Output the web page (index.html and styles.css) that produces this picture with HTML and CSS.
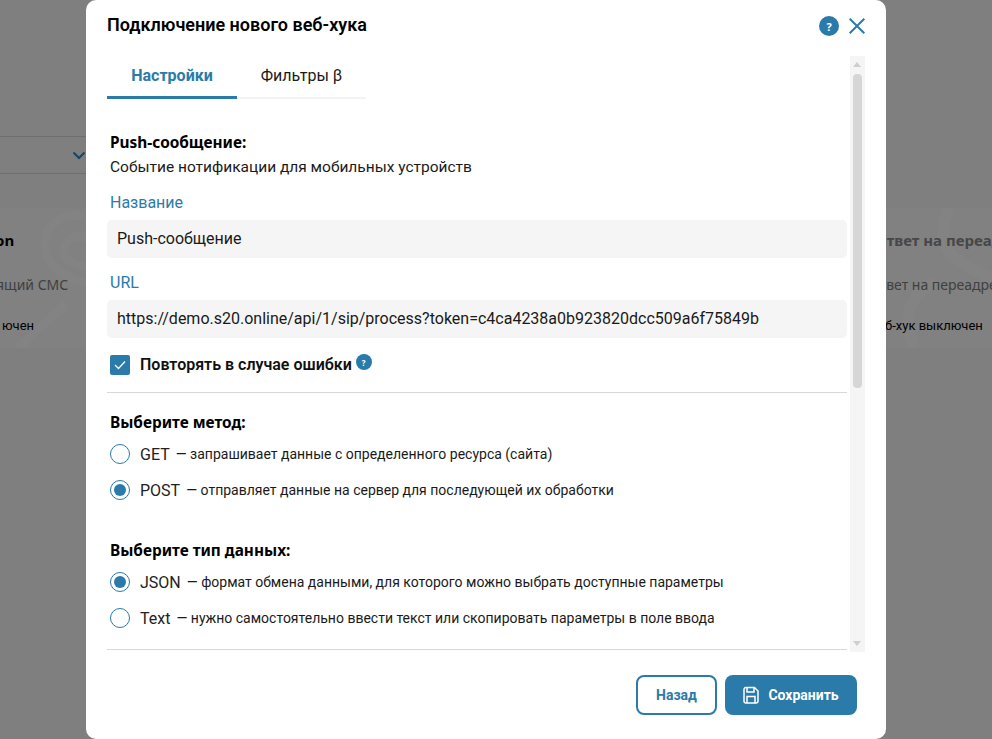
FILE: index.html
```html
<!DOCTYPE html>
<html lang="ru">
<head>
<meta charset="utf-8">
<title>Подключение нового веб-хука</title>
<link rel="stylesheet" href="styles.css">
</head>
<body>
<div class="page">
  <div class="filter">
    <svg class="filter-chevron" width="14" height="9" viewBox="0 0 14 9"><path d="M1.500 1.500 7 7l5.500-5.500" fill="none" stroke="#154664" stroke-width="2"/></svg>
  </div>
  <div class="cards">
    <div class="card card-left">
      <svg class="mark mark-left" width="90" height="140" viewBox="0 0 90 140"><path d="M90 10C60 0 42 20 45 42c3 20 25 30 45 34M90 30c-20-6-28 8-26 16 2 8 14 12 26 14M66 96 18 140" fill="none" stroke="#838383" stroke-width="9"/></svg>
      <div class="card-title">on</div>
      <div class="card-desc">ящий СМС</div>
      <div class="card-state">ючен</div>
    </div>
    <div class="card card-right">
      <svg class="mark mark-right" width="117" height="140" viewBox="0 0 117 140"><path d="M40 140C25 110 35 85 60 75M75 0c-15 30-10 50 42 70" fill="none" stroke="#838383" stroke-width="12"/></svg>
      <div class="card-title card-title-off">Ответ на переадресацию</div>
      <div class="card-desc">Ответ на переадресацию</div>
      <div class="card-state">Веб-хук выключен</div>
    </div>
  </div>
</div>

<div class="modal">
  <header class="modal-head">
    <h1 class="modal-title">Подключение нового веб-хука</h1>
    <span class="help help-big">?</span>
    <svg class="close" width="16" height="16" viewBox="0 0 16 16"><path d="M.7.7l14.600 14.600M15.300.7.7 15.300" fill="none" stroke="#2a7ba9" stroke-width="2"/></svg>
  </header>

  <div class="scroll-row">
    <div class="content">
      <nav class="tabs">
        <span class="tab tab-active">Настройки</span>
        <span class="tab">Фильтры β</span>
      </nav>

      <div class="body">
        <div class="heading">Push-сообщение:</div>
        <div class="intro">Событие нотификации для мобильных устройств</div>

        <label class="label label-first">Название</label>
        <div class="field">Push-сообщение</div>
        <label class="label">URL</label>
        <div class="field">https://demo.s20.online/api/1/sip/process?token=c4ca4238a0b923820dcc509a6f75849b</div>

        <div class="repeat">
          <span class="check">
            <svg width="12" height="10" viewBox="0 0 12 10"><path d="M1 5l3.500 3.500L11 1.500" fill="none" stroke="#fff" stroke-width="1.300"/></svg>
          </span>
          <span class="repeat-text">Повторять в случае ошибки</span>
          <span class="help help-small">?</span>
        </div>

        <hr class="rule rule-a">

        <div class="heading heading-method">Выберите метод:</div>
        <div class="options">
          <div class="option"><span class="radio"></span><span class="opt-name">GET</span><span class="opt-desc">— запрашивает данные с определенного ресурса (сайта)</span></div>
          <div class="option"><span class="radio radio-on"></span><span class="opt-name">POST</span><span class="opt-desc">— отправляет данные на сервер для последующей их обработки</span></div>
        </div>

        <div class="heading heading-types">Выберите тип данных:</div>
        <div class="options">
          <div class="option"><span class="radio radio-on"></span><span class="opt-name">JSON</span><span class="opt-desc">— формат обмена данными, для которого можно выбрать доступные параметры</span></div>
          <div class="option"><span class="radio"></span><span class="opt-name">Text</span><span class="opt-desc">— нужно самостоятельно ввести текст или скопировать параметры в поле ввода</span></div>
        </div>

        <hr class="rule rule-b">
      </div>
    </div>

    <div class="scrollbar">
      <span class="arrow arrow-up"></span>
      <span class="thumb"></span>
      <span class="arrow arrow-down"></span>
    </div>
  </div>

  <footer class="modal-foot">
    <button class="btn btn-ghost">Назад</button>
    <button class="btn btn-solid">
      <svg width="16" height="18" viewBox="0 0 16 18"><path d="M1 3.500A2 2 0 0 1 3 1.500h8.500L15 5v10a2 2 0 0 1-2 2H3a2 2 0 0 1-2-2zM4 2v4h7V2M4 17v-6.500h8V17" fill="none" stroke="#fff" stroke-width="1.500"/></svg>
      Сохранить
    </button>
  </footer>
</div>
</body>
</html>
```

FILE: styles.css
```css
* { box-sizing: border-box; }
html, body { margin: 0; height: 100%; }
body {
  background: #7f7f7f;
  overflow: hidden;
  font-family: Roboto, "Liberation Sans", sans-serif;
  color: #000;
  position: relative;
}

/* dimmed page behind the dialog */
.page { padding-top: 136px; height: 739px; overflow: hidden; }
.filter {
  width: 100px;
  height: 38px;
  border-top: 1px solid #6f6f6f;
  border-bottom: 1px solid #6f6f6f;
  display: flex;
  align-items: center;
  padding-left: 72px;
}
.cards {
  margin-top: 34px;
  display: flex;
  justify-content: space-between;
}
.card {
  position: relative;
  height: 140px;
  background: #818181;
  overflow: hidden;
  padding-top: 22px;
  font-family: "Noto Sans", sans-serif;
}
.card-left { width: 90px; }
.card-right { width: 117px; white-space: nowrap; overflow: visible; }
.mark { position: absolute; top: 0; }
.mark-left { left: 0; }
.mark-right { right: 0; }
.card-title, .card-desc, .card-state { position: relative; white-space: nowrap; }
.card-title { font-size: 15px; font-weight: 700; line-height: 20px; color: #000; }
.card-title-off { color: #474747; }
.card-desc { margin-top: 25px; font-size: 14px; line-height: 20px; color: #404040; }
.card-state { margin-top: 21px; font-family: Roboto, sans-serif; font-size: 13px; line-height: 20px; color: #000; }
.card-left .card-title { margin-left: -5px; }
.card-left .card-desc { margin-left: -4px; }
.card-left .card-state { margin-left: 2px; }
.card-right .card-desc { margin-left: -6px; }
.card-right .card-state { margin-left: -5px; }

/* dialog */
.modal {
  position: absolute;
  left: 86px;
  top: 0;
  width: 800px;
  height: 739px;
  background: #fff;
  border-radius: 10px;
  display: flex;
  flex-direction: column;
}
.modal-head {
  height: 56px;
  padding: 0 21px;
  display: flex;
  align-items: center;
  flex: none;
}
.modal-title {
  margin: 0 auto 6px 0;
  font-size: 18px;
  line-height: 24px;
  font-weight: 600;
  color: #000;
}
.help {
  display: inline-flex;
  align-items: center;
  justify-content: center;
  border-radius: 50%;
  background: #2a7ba9;
  color: #fff;
  font-weight: 700;
  font-family: "Open Sans", sans-serif;
}
.help-big { width: 20px; height: 20px; font-size: 11px; margin: 0 10px 4px 0; }
.help-small { width: 16px; height: 16px; font-size: 8px; margin: 0 0 6px 4px; }
.close { margin: 0 0 4px 0; }

.scroll-row {
  flex: none;
  height: 596px;
  margin: 0 21px;
  display: flex;
  gap: 3px;
}
.content { width: 740px; flex: none; overflow: hidden; }

.scrollbar {
  width: 15px;
  flex: none;
  background: #f5f5f5;
  display: flex;
  flex-direction: column;
  align-items: center;
  position: relative;
  padding-top: 18px;
}
.thumb {
  width: 9px;
  height: 314px;
  background: #d6d6d6;
  border-radius: 4px;
}
.arrow {
  position: absolute;
  left: 3px;
  width: 0;
  height: 0;
  border-left: 4.500px solid transparent;
  border-right: 4.500px solid transparent;
}
.arrow-up { top: 6px; border-bottom: 5px solid #cfcfcf; }
.arrow-down { bottom: 6px; border-top: 5px solid #cfcfcf; }

.tabs {
  width: 259px;
  height: 43px;
  display: flex;
  border-bottom: 2px solid #f3f3f3;
}
.tab {
  height: 43px;
  font-size: 16px;
  line-height: 39px;
  text-align: center;
  color: #1a1a1a;
  width: 130px;
  flex: none;
}
.tab:nth-child(2) { width: 129px; }
.tab-active {
  color: #2a7ba9;
  font-weight: 700;
  border-bottom: 3px solid #2a7ba9;
}

.body { padding-top: 34px; }
.heading {
  margin-left: 3px;
  font-family: "Noto Sans", sans-serif;
  font-weight: 700;
  font-size: 15.400px;
  line-height: 20px;
  color: #000;
}
.intro { margin: 4px 0 0 3px; font-size: 15.500px; line-height: 20px; color: #1a1a1a; }
.label {
  display: block;
  margin: 15px 0 7px 3px;
  font-size: 16px;
  line-height: 20px;
  color: #2a7ba9;
}
.label-first { margin-top: 16px; }
.field {
  height: 38px;
  padding: 0 10px;
  background: #f5f5f5;
  border-radius: 5px;
  font-size: 16px;
  line-height: 38px;
  color: #1a1a1a;
  white-space: nowrap;
}
.repeat {
  margin: 17px 0 0 3px;
  display: flex;
  align-items: center;
  height: 20px;
}
.check {
  width: 20px;
  height: 20px;
  border-radius: 2px;
  background: #2a7ba9;
  display: flex;
  align-items: center;
  justify-content: center;
  margin-right: 10px;
}
.repeat-text { font-size: 16px; font-weight: 600; line-height: 20px; color: #111; }
.rule { border: 0; border-top: 1px solid #d8d8d8; margin: 0; }
.rule-a { margin-top: 17px; }
.heading-method { margin-top: 20px; }
.options { display: flex; flex-direction: column; gap: 16px; margin-top: 11px; }
.option { margin-left: 3px; height: 20px; display: flex; align-items: center; }
.radio {
  width: 20px;
  height: 20px;
  border: 1.500px solid #2a7ba9;
  border-radius: 50%;
  margin-right: 10px;
  flex: none;
  position: relative;
}
.radio-on::after {
  content: "";
  position: absolute;
  inset: 3px;
  border-radius: 50%;
  background: #2a7ba9;
}
.opt-name { font-size: 16px; color: #222; margin-right: 6px; }
.opt-desc { font-size: 14px; color: #1a1a1a; }
.heading-types { margin-top: 41px; }
.rule-b { margin-top: 21px; }

.modal-foot {
  flex: none;
  display: flex;
  justify-content: flex-end;
  gap: 8px;
  padding: 23px 29px 0 0;
}
.btn {
  height: 40px;
  border-radius: 8px;
  font-family: Roboto, sans-serif;
  font-size: 14px;
  font-weight: 700;
  display: flex;
  align-items: center;
  justify-content: center;
}
.btn-ghost { width: 81px; background: #fff; border: 2px solid #2a7ba9; color: #2a7ba9; }
.btn-solid { width: 132px; background: #2a7ba9; border: 0; color: #fff; gap: 9px; }
```
